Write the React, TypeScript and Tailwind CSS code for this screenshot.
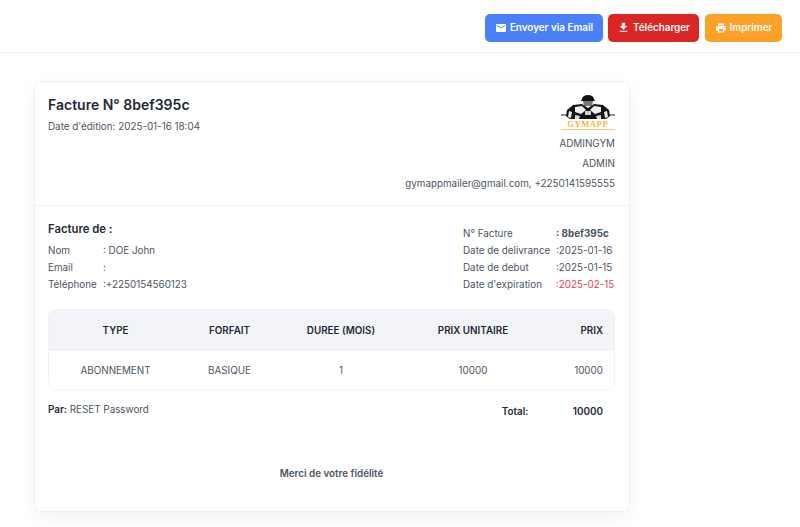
import { MdEmail, MdFileDownload, MdPrint } from "react-icons/md";

const billing = [
  { label: "Nom", value: ": DOE John" },
  { label: "Email", value: ":" },
  { label: "Téléphone", value: ":+2250154560123" },
];

const dates = [
  { label: "N° Facture", value: ": 8bef395c", cls: "font-bold text-[#4b5563]" },
  { label: "Date de delivrance", value: ":2025-01-16", cls: "text-[#4b5563]" },
  { label: "Date de debut", value: ":2025-01-15", cls: "text-[#4b5563]" },
  { label: "Date d'expiration", value: ":2025-02-15", cls: "text-[#df4358]" },
];

const Logo = () => (
  <div className="flex w-[54px] flex-col items-center">
    <svg width="54" height="26" viewBox="0 0 54 26">
      <path d="M0 20h8M46 20h8" stroke="#222" strokeWidth="1" />
      <path d="M21 4a6 4 0 0 1 12 0l1 2H20z" fill="#111" />
      <path d="M22 6h10l-1 5h-8z" fill="#777" />
      <path d="M21 9l-9 1-6 5-1 6 4 3h36l4-3-1-6-6-5-9-1-6 4z" fill="#151515" />
      <path d="M14 12l7-1 4 4-5 4-6-2zM40 12l-7-1-4 4 5 4 6-2z" fill="#f0f0f0" />
      <path d="M8 16l3 1-1 6-3-1zM46 16l-3 1 1 6 3-1z" fill="#e8e8e8" />
      <path d="M24 16h6v4h-6z" fill="#cfcfcf" />
      <path d="M14 20l5 1-1 3h-4zM40 20l-5 1 1 3h4z" fill="#dcdcdc" />
    </svg>
    <span className="font-['Liberation_Serif',serif] text-[8px] leading-[7px] font-bold tracking-[1px] text-[#f5b324]">GYMAPP</span>
    <div className="mt-[1px] h-px w-full bg-[#f7cd70]" />
  </div>
);

export default function App() {
  return (
    <div className="h-[527px] overflow-hidden bg-white font-['Inter',sans-serif]">
      <div className="flex h-[53px] items-center justify-end border-b border-[#eef0f4] pt-[3px] pr-[18px]">
        <button className="flex h-7 w-[118px] items-center justify-center gap-[3px] rounded-[5px] bg-[#4b80fb] text-[9.85px] font-semibold whitespace-nowrap text-white">
          <MdEmail size={12} />
          Envoyer via Email
        </button>
        <button className="ml-[5px] flex h-7 w-[91px] items-center justify-center gap-[3px] rounded-[5px] bg-[#dc2626] text-[9.85px] font-semibold whitespace-nowrap text-white">
          <MdFileDownload size={13} />
          Télécharger
        </button>
        <button className="ml-[6px] flex h-7 w-[77px] items-center justify-center gap-[3px] rounded-[5px] bg-[#ffa028] text-[9.85px] font-semibold whitespace-nowrap text-white">
          <MdPrint size={12} />
          Imprimer
        </button>
      </div>

      <div className="pt-7 pl-[34px]">
        <div className="w-[596px] rounded-lg border border-[#f1f2f5] bg-white shadow-[0_6px_20px_rgba(0,0,0,0.05)]">
          <div className="flex h-[124px] justify-between border-b border-[#eef0f4] pt-[13px] pr-[14px] pl-[13px]">
            <div>
              <h1 className="text-[14px] leading-[20px] font-semibold text-[#1f2937]">Facture N° 8bef395c</h1>
              <p className="mt-[4px] text-[9.85px] leading-[14px] text-[#4b5563]">Date d'édition: 2025-01-16 18:04</p>
            </div>
            <div className="flex flex-col items-end text-[9.85px] leading-[14px] text-[#4b5563]">
              <Logo />
              <p className="mt-[6px]">ADMINGYM</p>
              <p className="mt-[6px]">ADMIN</p>
              <p className="mt-[6px]">gymappmailer@gmail.com, +2250141595555</p>
            </div>
          </div>

          <div className="pt-[16px] pr-[14px] pl-[13px]">
            <div className="flex justify-between">
              <div>
                <h2 className="text-[11.3px] leading-[15px] font-semibold text-[#1f2937]">Facture de :</h2>
                <div className="mt-[6px] flex flex-col gap-[3px]">
                  {billing.map((row) => (
                    <div key={row.label} className="flex text-[9.85px] leading-[14px] whitespace-nowrap text-[#4b5563]">
                      <span className="w-[55px]">{row.label}</span>
                      <span>{row.value}</span>
                    </div>
                  ))}
                </div>
              </div>
              <div className="flex flex-col gap-[3px] pt-[4px]">
                {dates.map((row) => (
                  <div key={row.label} className="flex text-[9.85px] leading-[14px] whitespace-nowrap text-[#4b5563]">
                    <span className="w-[93px]">{row.label}</span>
                    <span className={`w-[59px] ${row.cls}`}>{row.value}</span>
                  </div>
                ))}
              </div>
            </div>

            <div className="mt-[18px] overflow-hidden rounded-lg border border-[#f1f2f5]">
              <div className="grid h-[41px] grid-cols-[133px_95px_128px_136px_1fr] items-center bg-[#f3f4f8] text-center text-[9.85px] font-semibold text-[#1f2937]">
                <span>TYPE</span>
                <span>FORFAIT</span>
                <span>DUREE (MOIS)</span>
                <span>PRIX UNITAIRE</span>
                <span className="pr-[11px] text-right">PRIX</span>
              </div>
              <div className="grid h-[38px] grid-cols-[133px_95px_128px_136px_1fr] items-center text-center text-[9.85px] text-[#4b5563]">
                <span>ABONNEMENT</span>
                <span>BASIQUE</span>
                <span>1</span>
                <span>10000</span>
                <span className="pr-[11px] text-right">10000</span>
              </div>
            </div>

            <div className="mt-[12px] flex justify-between">
              <p className="text-[9.85px] leading-[14px] text-[#4b5563]">
                <span className="font-semibold text-[#1f2937]">Par:</span> RESET Password
              </p>
              <div className="mt-[2px] flex text-[9.85px] leading-[14px] font-semibold text-[#1f2937]">
                <span className="w-[71px]">Total:</span>
                <span className="mr-[12px]">10000</span>
              </div>
            </div>

            <p className="mt-[48px] pb-[31px] text-center text-[9.85px] leading-[14px] font-semibold text-[#4b5563]">Merci de votre fidélité</p>
          </div>
        </div>
      </div>
    </div>
  );
}
